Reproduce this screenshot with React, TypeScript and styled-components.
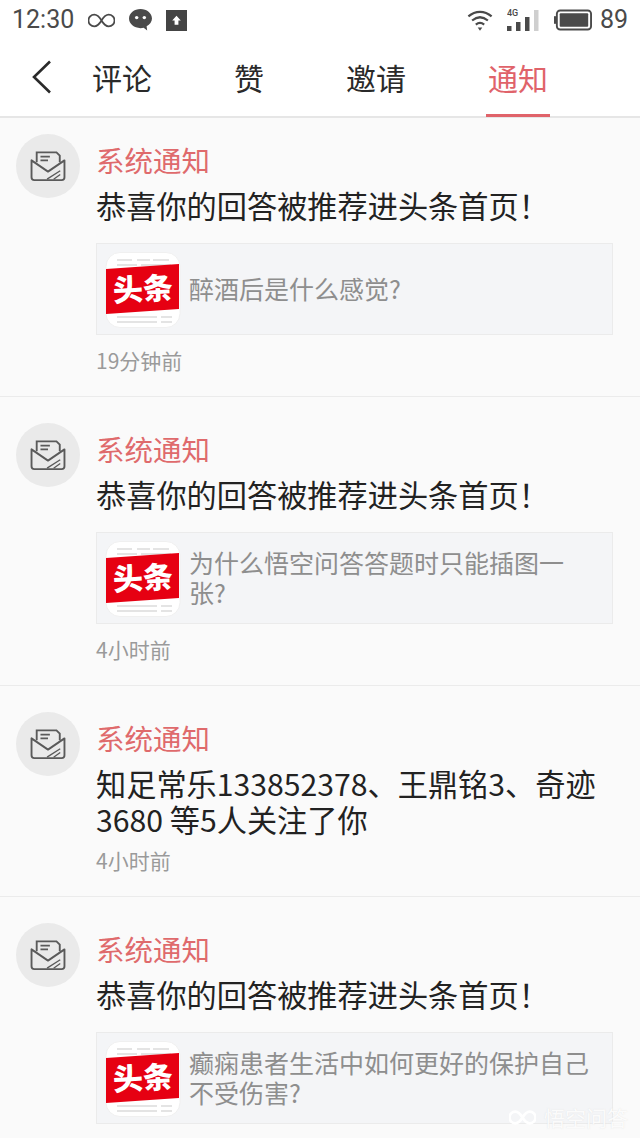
import React from 'react';
import styled, { createGlobalStyle } from 'styled-components';

const Global = createGlobalStyle`
  html, body {
    margin: 0;
    padding: 0;
    background: #fafafa;
  }
  * {
    box-sizing: border-box;
  }
`;

const FONT = `"Noto Sans CJK SC", "Noto Sans", sans-serif`;

const Page = styled.div`
  width: 640px;
  height: 1138px;
  overflow: hidden;
  position: relative;
  background: #fafafa;
  font-family: ${FONT};
`;

const StatusBar = styled.div`
  height: 40px;
  padding: 0 12px;
  display: flex;
  align-items: center;
  justify-content: space-between;
  background: #fff;
  color: #4a4a4a;
`;

const StatusGroup = styled.div<{ $gap: number }>`
  display: flex;
  align-items: center;
  gap: ${(p) => p.$gap}px;
`;

const StatusText = styled.span<{ $tight?: boolean }>`
  font-family: Roboto, sans-serif;
  font-size: 25px;
  line-height: 40px;
  margin-left: ${(p) => (p.$tight ? '-6px' : '0')};
`;

const NavBar = styled.div`
  height: 78px;
  display: flex;
  align-items: stretch;
  background: #fff;
  border-bottom: 2px solid #e6e6e6;
`;

const BackButton = styled.div`
  width: 92px;
  padding-left: 31px;
  display: flex;
  align-items: center;
  padding-bottom: 3px;
`;

const Tabs = styled.div`
  display: flex;
`;

const Tab = styled.div<{ $active?: boolean; $width: number }>`
  width: ${(p) => p.$width}px;
  height: 76px;
  font-size: 30px;
  line-height: 74px;
  color: ${(p) => (p.$active ? '#e0636a' : '#2a2a2a')};
  position: relative;
  &::after {
    content: '';
    display: ${(p) => (p.$active ? 'block' : 'none')};
    position: absolute;
    left: -2px;
    width: 64px;
    bottom: -1px;
    height: 3px;
    background: #e0636a;
  }
`;

const Item = styled.div<{ $height: number; $first?: boolean }>`
  height: ${(p) => p.$height}px;
  padding: ${(p) => (p.$first ? 16 : 26)}px 27px 0 16px;
  display: flex;
  gap: 16px;
  border-bottom: 1px solid #ebebeb;
`;

const Avatar = styled.div`
  width: 64px;
  height: 64px;
  flex: none;
  border-radius: 50%;
  background: #eaeaea;
  display: flex;
  align-items: center;
  justify-content: center;
`;

const Content = styled.div`
  flex: 1;
  min-width: 0;
`;

const Title = styled.div`
  font-size: 28.5px;
  line-height: 40px;
  margin-top: 6px;
  color: #df6a6c;
`;

const Body = styled.div`
  font-size: 30.2px;
  line-height: 36px;
  margin-top: 7px;
  color: #222;
`;

const Card = styled.div`
  height: 92px;
  margin-top: 20px;
  margin-bottom: 10px;
  padding: 0 21px 2px 8px;
  display: flex;
  align-items: center;
  gap: 8px;
  background: #f4f5f7;
  border: 1px solid #ebebeb;
`;

const CardText = styled.div`
  font-size: 25px;
  line-height: 30px;
  color: #8e8e8e;
  flex: 1;
  min-width: 0;
`;

const Logo = styled.div`
  width: 76px;
  height: 76px;
  flex: none;
  margin-top: 3px;
`;

const Time = styled.div`
  font-size: 21px;
  line-height: 30px;
  margin-top: 8px;
  color: #9a9a9a;
`;

const Watermark = styled.div`
  position: absolute;
  right: 12px;
  bottom: 6px;
  display: flex;
  align-items: center;
  gap: 8px;
  font-size: 21px;
  line-height: 30px;
  color: rgba(255, 255, 255, 0.9);
  text-shadow: 0 0 1px rgba(200, 200, 200, 0.5);
`;

const MailIcon = () => (
  <svg width="36" height="32" viewBox="0 0 38 34" fill="none" stroke="#5a5a5a" strokeWidth="2">
    <path d="M7 13V2.500h21l3.500 3.500V13" />
    <path d="M11 7h10M11 11h8" />
    <path d="M1.500 11v18a3 3 0 0 0 3 3h29a3 3 0 0 0 3-3V11L19 23z" strokeLinejoin="round" />
    <path d="M18 31l14-9M25 31l7-5" strokeWidth="1.400" />
  </svg>
);

const ToutiaoLogo = () => (
  <Logo>
    <svg width="76" height="76" viewBox="0 0 76 76">
      <rect x="1" y="0.500" width="74" height="75" rx="14" fill="#fff" stroke="#f0f0f0" />
      <path d="M12 8h15M32 8h13M48 8h16M12 13h20M36 13h30M12 65h40M56 65h11M12 70h40M56 70h11" stroke="#dcdcdc" strokeWidth="1.500" />
      <path d="M1 17L74 12V57L1 62z" fill="#e60012" />
      <text
        x="38"
        y="48"
        textAnchor="middle"
        fontFamily={`"Noto Sans CJK SC", sans-serif`}
        fontWeight="900"
        fontSize="30"
        fill="#fff"
        transform="rotate(-3 38 37)"
      >
        头条
      </text>
    </svg>
  </Logo>
);

const InfinityIcon = () => (
  <svg width="27" height="15" viewBox="0 0 30 16" fill="none" stroke="#4a4a4a" strokeWidth="2">
    <path d="M15 8C12 3 9.500 1.500 7 1.500a6.500 6.500 0 0 0 0 13C9.500 14.500 12 13 15 8c3-5 5.500-6.500 8-6.500a6.500 6.500 0 0 1 0 13C20.500 14.500 18 13 15 8z" />
  </svg>
);

const ChatIcon = () => (
  <svg width="23" height="22" viewBox="0 0 24 23">
    <path d="M12 0C5.400 0 0 4.400 0 10c0 5.500 5.400 10 12 10 1.200 0 2.300-.1 3.300-.4L19 22.500l-.6-4.400C21.800 16.300 24 13.400 24 10 24 4.400 18.600 0 12 0z" fill="#4a4a4a" />
    <circle cx="8" cy="9" r="1.800" fill="#fff" />
    <circle cx="16" cy="9" r="1.800" fill="#fff" />
  </svg>
);

const UploadIcon = () => (
  <svg width="21" height="21" viewBox="0 0 22 22">
    <rect width="22" height="22" fill="#444" />
    <path d="M11 6l4.500 5H13v4.500H9V11H6.500z" fill="#fff" />
  </svg>
);

const WifiIcon = () => (
  <svg width="26" height="23" viewBox="0 0 28 24" fill="none" stroke="#4a4a4a" strokeWidth="2.400">
    <path d="M1.500 7.500C9 1 19 1 26.500 7.500" />
    <path d="M5.500 12c5.500-4.500 11.500-4.500 17 0" />
    <path d="M9.500 16.500c3-2.500 6-2.500 9 0" />
    <path d="M11.500 19.500h5L14 23z" fill="#4a4a4a" stroke="none" />
  </svg>
);

const SignalIcon = () => (
  <svg width="33" height="24" viewBox="0 0 33 24">
    <text x="0" y="8" fontFamily="Roboto, sans-serif" fontSize="9" fontWeight="500" fill="#4a4a4a">4G</text>
    <rect x="0" y="18" width="4.500" height="5" fill="#4a4a4a" />
    <rect x="9" y="14" width="4.500" height="9" fill="#4a4a4a" />
    <rect x="18" y="9" width="4.500" height="14" fill="#4a4a4a" />
    <rect x="27" y="2" width="4.500" height="21" fill="#cfcfcf" />
  </svg>
);

const BatteryIcon = () => (
  <svg width="38" height="22" viewBox="0 0 40 22">
    <rect x="3" y="1" width="36" height="20" rx="3.500" fill="none" stroke="#4a4a4a" strokeWidth="2" />
    <rect x="0" y="7" width="2.500" height="8" fill="#4a4a4a" />
    <rect x="6" y="4" width="30" height="14" rx="1" fill="#4a4a4a" />
  </svg>
);

const BackIcon = () => (
  <svg width="22" height="34" viewBox="0 0 22 34" fill="none" stroke="#2a2a2a" strokeWidth="2.600">
    <path d="M19 1.500L3 17l16 15.500" />
  </svg>
);

type Notice = {
  body: string;
  card?: string;
  time: string;
  height: number;
};

const notices: Notice[] = [
  { body: '恭喜你的回答被推荐进头条首页！', card: '醉酒后是什么感觉?', time: '19分钟前', height: 279 },
  { body: '恭喜你的回答被推荐进头条首页！', card: '为什么悟空问答答题时只能插图一张?', time: '4小时前', height: 289 },
  { body: '知足常乐133852378、王鼎铭3、奇迹3680 等5人关注了你', time: '4小时前', height: 211 },
  { body: '恭喜你的回答被推荐进头条首页！', card: '癫痫患者生活中如何更好的保护自己不受伤害?', time: '', height: 250 },
];

function App() {
  return (
    <Page>
      <Global />
      <StatusBar>
        <StatusGroup $gap={14}>
          <StatusText>12:30</StatusText>
          <InfinityIcon />
          <ChatIcon />
          <UploadIcon />
        </StatusGroup>
        <StatusGroup $gap={14}>
          <WifiIcon />
          <SignalIcon />
          <BatteryIcon />
          <StatusText $tight>89</StatusText>
        </StatusGroup>
      </StatusBar>
      <NavBar>
        <BackButton>
          <BackIcon />
        </BackButton>
        <Tabs>
          <Tab $width={142}>评论</Tab>
          <Tab $width={112}>赞</Tab>
          <Tab $width={142}>邀请</Tab>
          <Tab $width={64} $active>通知</Tab>
        </Tabs>
      </NavBar>
      {notices.map((n, i) => (
        <Item key={i} $height={n.height} $first={i === 0}>
          <Avatar>
            <MailIcon />
          </Avatar>
          <Content>
            <Title>系统通知</Title>
            <Body>{n.body}</Body>
            {n.card && (
              <Card>
                <ToutiaoLogo />
                <CardText>{n.card}</CardText>
              </Card>
            )}
            {n.time && <Time>{n.time}</Time>}
          </Content>
        </Item>
      ))}
      <Watermark>
        <svg width="27" height="15" viewBox="0 0 30 16" fill="none" stroke="#fff" strokeWidth="3">
          <path d="M15 8C12 3 9.500 1.500 7 1.500a6.500 6.500 0 0 0 0 13C9.500 14.500 12 13 15 8c3-5 5.500-6.500 8-6.500a6.500 6.500 0 0 1 0 13C20.500 14.500 18 13 15 8z" />
        </svg>
        悟空问答
      </Watermark>
    </Page>
  );
}

export default App;
